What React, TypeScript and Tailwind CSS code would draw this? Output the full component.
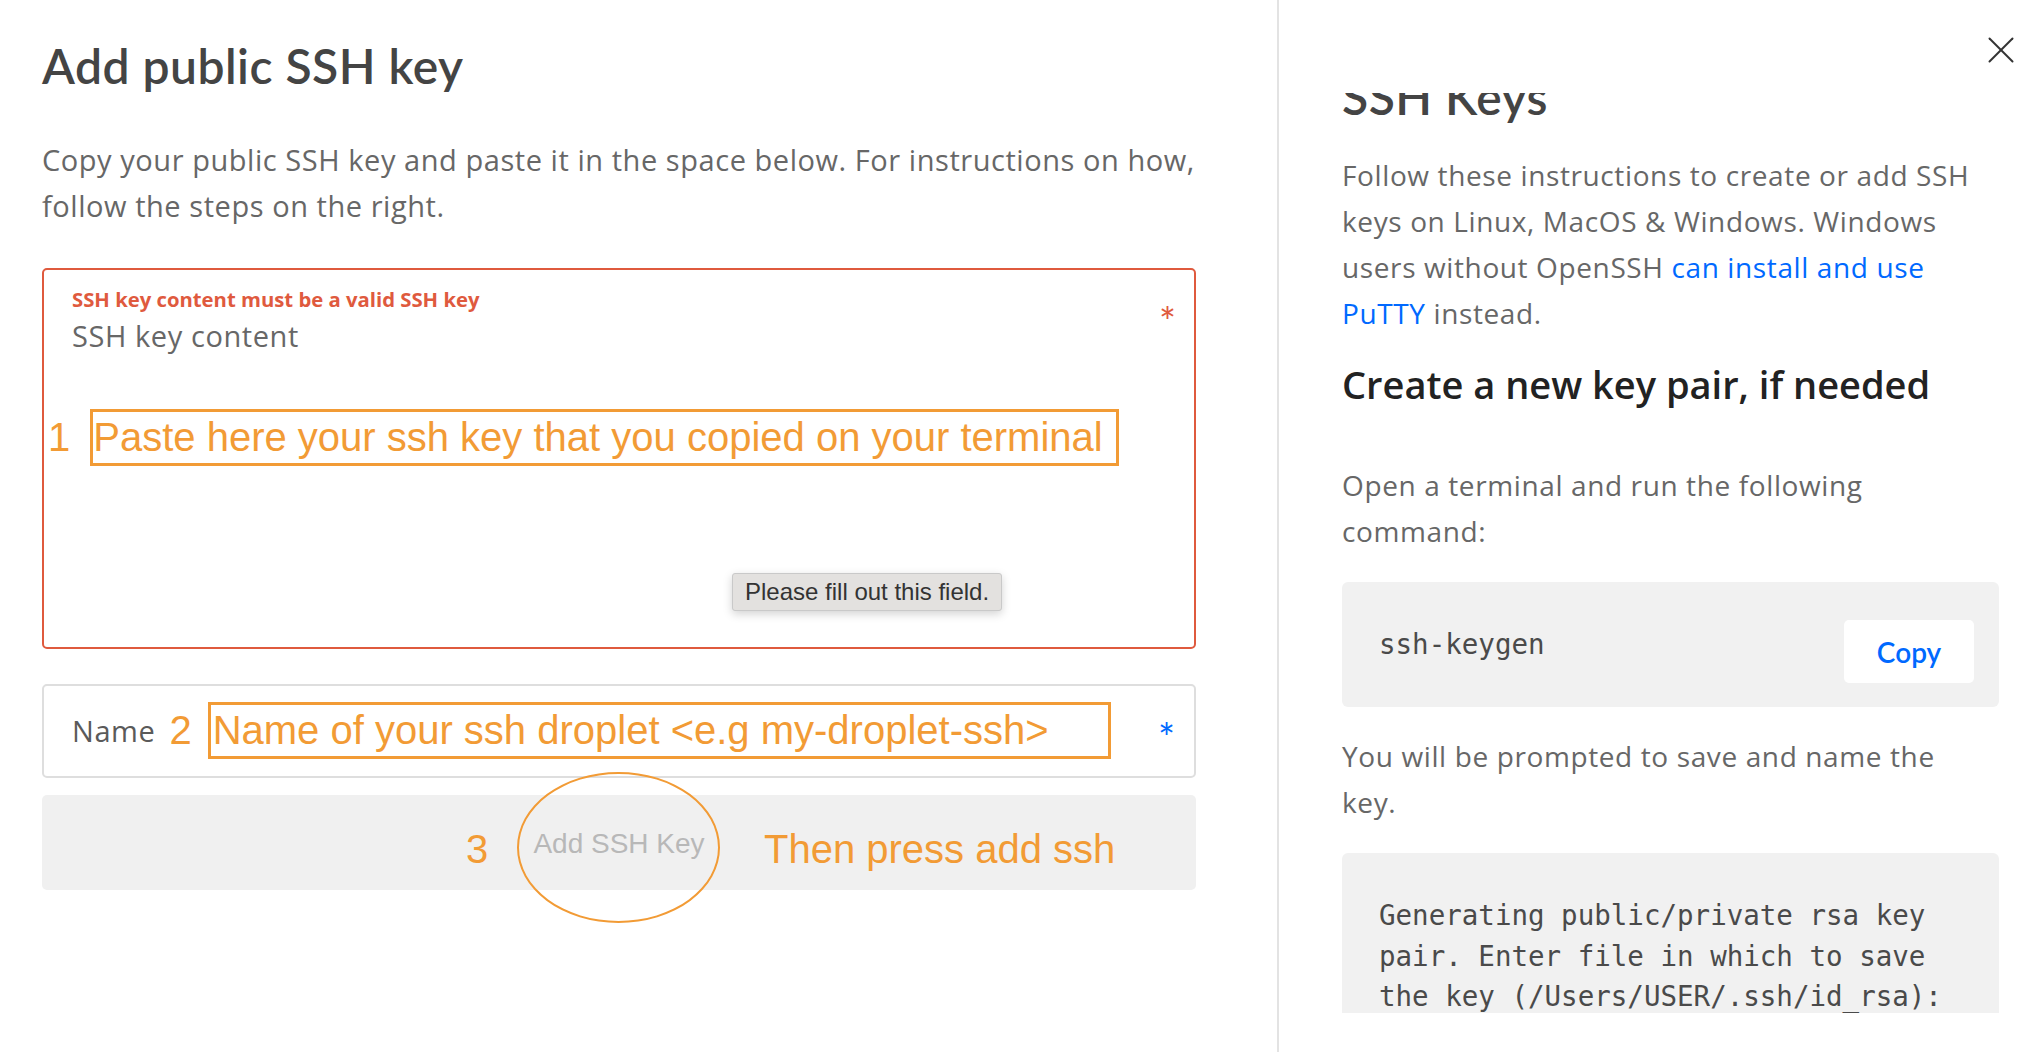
// App.tsx
const ORANGE = "text-[#f29b35]";
const BODY = "font-['Open_Sans',sans-serif]";
const HELV = "font-['Liberation_Sans',Arial,sans-serif]";

function CloseIcon() {
  return (
    <svg width="26" height="26" viewBox="0 0 26 26" fill="none" stroke="#333" strokeWidth="2" strokeLinecap="round">
      <path d="M1.5 1.5 L24.5 24.5" />
      <path d="M24.5 1.5 L1.5 24.5" />
    </svg>
  );
}

// ------- left: the form -------
function KeyForm() {
  return (
    <div className="w-[1277px] shrink-0 pl-[42px] pr-[81px] pt-[37px]">
      <h1 className="text-[48px] leading-[1.2] font-semibold tracking-[0.01em] text-[#444]">Add public SSH key</h1>
      <p className={`mt-[42px] whitespace-nowrap ${BODY} text-[29px] leading-[46px] tracking-[0.019em] text-[#676767]`}>
        Copy your public SSH key and paste it in the space below. For instructions on how,
        <br />
        follow the steps on the right.
      </p>

      {/* textarea with error */}
      <div className="relative mt-[39px] h-[381px] rounded-[5px] border-2 border-[#df5a3e] px-[28px] pt-[17px]">
        <p className={`${BODY} text-[20.3px] leading-[24px] font-bold text-[#df5a3e]`}>SSH key content must be a valid SSH key</p>
        <p className={`mt-[7px] ${BODY} text-[29px] leading-[36px] tracking-[0.02em] text-[#676767]`}>SSH key content</p>
        <span className="absolute right-[18px] top-[32px] text-[40px] leading-[40px] text-[#df5a3e]">*</span>

        {/* annotation 1 */}
        <div className={`absolute left-[4px] top-[139px] flex items-center gap-[20px] ${HELV} text-[40px] ${ORANGE}`}>
          <span className="leading-[51px]">1</span>
          <div className="w-[1029px] border-[3px] border-[#f29b35] leading-[51px]">
            Paste here your ssh key that you copied on your terminal
          </div>
        </div>

        {/* browser validation tooltip */}
        <div className={`absolute left-[688px] top-[303px] flex h-[38px] w-[270px] items-center rounded-[3px] border border-[#c9c9c9] bg-[#e3e1df] pl-[12px] ${HELV} text-[24px] text-[#333] shadow-[0_3px_10px_rgba(0,0,0,0.18)]`}>
          Please fill out this field.
        </div>
      </div>

      {/* name input */}
      <div className="mt-[35px] flex h-[94px] items-center rounded-[5px] border-2 border-[#dedede] pl-[28px] pr-[19px]">
        <span className={`${BODY} text-[29px] tracking-[0.02em] text-[#5a5a5a]`}>Name</span>
        <span className={`ml-[14px] ${HELV} text-[40px] leading-[51px] ${ORANGE}`}>2</span>
        <div className={`ml-[16px] w-[903px] border-[3px] border-[#f29b35] pl-[2px] ${HELV} text-[40px] leading-[51px] ${ORANGE}`}>
          Name of your ssh droplet &lt;e.g my-droplet-ssh&gt;
        </div>
        <span className="ml-auto mt-[14px] text-[40px] leading-[40px] text-[#0069ff]">*</span>
      </div>

      {/* submit */}
      <div className="relative mt-[17px] flex h-[95px] items-center justify-center rounded-[5px] bg-[#f0f0f0]">
        <span className={`mt-[3px] ${HELV} text-[28px] leading-[32px] text-[#b8b8b8]`}>Add SSH Key</span>
        <span className={`absolute left-[424px] top-[34px] ${HELV} text-[40px] leading-[40px] ${ORANGE}`}>3</span>
        <div className="absolute left-[475px] top-[-23px] h-[151px] w-[203px] rounded-[50%] border-[2.5px] border-[#f29b35]" />
        <span className={`absolute left-[722px] top-[34px] ${HELV} text-[40px] leading-[40px] ${ORANGE}`}>
          Then press add ssh
        </span>
      </div>
    </div>
  );
}

// ------- right: instructions -------
function Instructions() {
  const para = `${BODY} text-[28px] leading-[46px] tracking-[0.022em] text-[#676767]`;
  return (
    <div className="flex h-full flex-1 flex-col border-l-2 border-[#e3e3e3]">
      <div className="flex h-[93px] shrink-0 justify-end pr-[20px] pt-[37px]">
        <CloseIcon />
      </div>
      <div className="h-[920px] overflow-hidden pl-[63px] pr-[35px]">
        <h2 className="mt-[-25px] text-[48px] leading-[1.2] font-semibold tracking-[0.01em] text-[#444]">SSH Keys</h2>
        <p className={`mt-[26px] ${para}`}>
          Follow these instructions to create or add SSH
          <br />
          keys on Linux, MacOS &amp; Windows. Windows
          <br />
          users without OpenSSH <span className="text-[#0069ff]">can install and use</span>
          <br />
          <span className="text-[#0069ff]">PuTTY</span> instead.
        </p>
        <h3 className={`mt-[26px] ${BODY} text-[38px] leading-[1.2] font-semibold text-[#222]`}>Create a new key pair, if needed</h3>
        <p className={`mt-[55px] ${para}`}>
          Open a terminal and run the following
          <br />
          command:
        </p>
        <div className="mt-[28px] flex h-[125px] items-center justify-between rounded-[6px] bg-[#f1f1f1] pl-[37px] pr-[25px]">
          <span className="font-['DejaVu_Sans_Mono',monospace] text-[27.5px] text-[#4a4a4a]">ssh-keygen</span>
          <button className="mt-[14px] h-[63px] w-[130px] rounded-[5px] bg-white text-[28px] font-semibold text-[#0069ff]">
            Copy
          </button>
        </div>
        <p className={`mt-[26px] ${para}`}>
          You will be prompted to save and name the
          <br />
          key.
        </p>
        <div className="mt-[28px] rounded-[6px] bg-[#f1f1f1] pb-[40px] pl-[37px] pr-[35px] pt-[42px] font-['DejaVu_Sans_Mono',monospace] text-[27.5px] leading-[40.5px] text-[#4a4a4a]">
          Generating public/private rsa key pair. Enter file in which to save the key (/Users/USER/.ssh/id_rsa):
          Enter passphrase (empty for no passphrase):
        </div>
      </div>
    </div>
  );
}

export default function App() {
  return (
    <div className="flex h-[1052px] w-full overflow-hidden bg-white font-['Lato',sans-serif]">
      <KeyForm />
      <Instructions />
    </div>
  );
}
